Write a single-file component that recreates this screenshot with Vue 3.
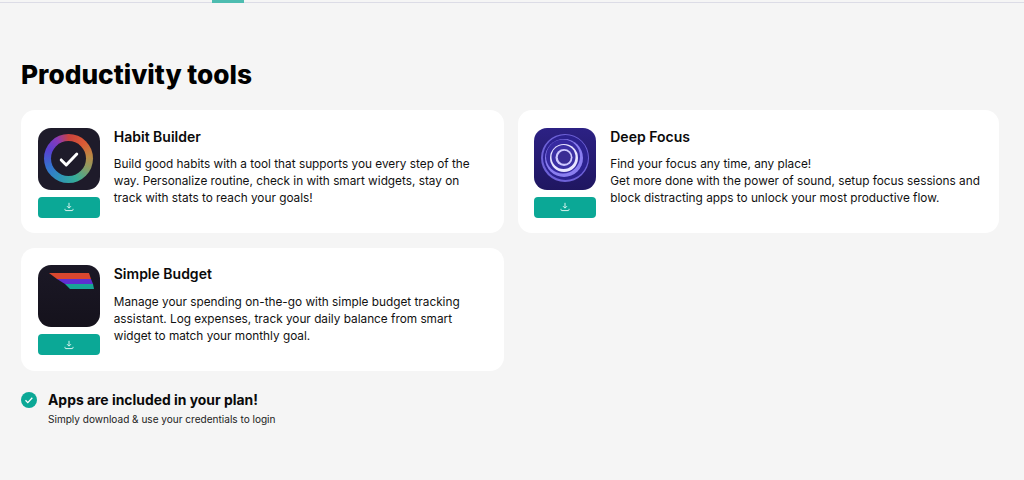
<script setup>
const conic = 'conic-gradient(from 0deg, #c8423f 0deg, #dc5a34 45deg, #b98a45 85deg, #8c9a62 115deg, #35ad98 160deg, #2f93b8 205deg, #3374cf 245deg, #5a3fd0 295deg, #8a3ab8 330deg, #c8423f 360deg)'
</script>

<template>
  <div class="page">
    <div class="topbar"><span class="tab"></span></div>
    <main class="content">
      <h1 class="title">Productivity tools</h1>
      <div class="grid">
        <article class="card">
          <div class="side">
            <div class="icon habit">
              <div class="ring" :style="{ background: conic }"><div class="ring-hole"></div></div>
              <svg class="check" viewBox="0 0 24 24" width="22" height="22"><path d="M3.500 13l5.500 5.500L20.500 6.500" fill="none" stroke="#fff" stroke-width="3.200" stroke-linecap="round" stroke-linejoin="round"/></svg>
            </div>
            <button class="dl"><svg viewBox="0 0 12 12" width="10" height="10"><path d="M6 1v6.200M3.600 5l2.400 2.400L8.400 5M1.200 8.200v1.200c0 .5.400.9.900.9h7.800c.5 0 .9-.4.900-.9V8.200" fill="none" stroke="#d7f3ee" stroke-width="1.200"/></svg></button>
          </div>
          <div class="body">
            <h2>Habit Builder</h2>
            <p>Build good habits with a tool that supports you every step of the way. Personalize routine, check in with smart widgets, stay on track with stats to reach your goals!</p>
          </div>
        </article>
        <article class="card">
          <div class="side">
            <div class="icon focus">
              <svg viewBox="0 0 62 62" width="62" height="62">
                <circle cx="31" cy="30" r="24" fill="#6e62d8"/>
                <circle cx="31.500" cy="29.500" r="22.500" fill="#2c2290"/>
                <circle cx="30" cy="30" r="19" fill="#8a7ef0"/>
                <circle cx="29" cy="28.500" r="17" fill="#362aa0"/>
                <circle cx="30" cy="30" r="14" fill="#e8e5ff"/>
                <circle cx="29.500" cy="29" r="12" fill="#3c30a4"/>
                <circle cx="30" cy="29.500" r="8.500" fill="#cfc9ff"/>
                <circle cx="30.300" cy="29.300" r="6.500" fill="#3a2c94"/>
              </svg>
            </div>
            <button class="dl"><svg viewBox="0 0 12 12" width="10" height="10"><path d="M6 1v6.200M3.600 5l2.400 2.400L8.400 5M1.200 8.200v1.200c0 .5.400.9.900.9h7.800c.5 0 .9-.4.900-.9V8.200" fill="none" stroke="#d7f3ee" stroke-width="1.200"/></svg></button>
          </div>
          <div class="body">
            <h2>Deep Focus</h2>
            <p>Find your focus any time, any place!<br>Get more done with the power of sound, setup focus sessions and block distracting apps to unlock your most productive flow.</p>
          </div>
        </article>
        <article class="card">
          <div class="side">
            <div class="icon budget">
              <svg viewBox="0 0 62 62" width="62" height="62">
                <polygon points="11,8 51,8 53,14 19,14" fill="#d9472f"/>
                <polygon points="19,14 53,14 55,19 27,19" fill="#5f2fd0"/>
                <polygon points="27,19 55,19 56,24 32,24" fill="#19a596"/>
              </svg>
            </div>
            <button class="dl"><svg viewBox="0 0 12 12" width="10" height="10"><path d="M6 1v6.200M3.600 5l2.400 2.400L8.400 5M1.200 8.200v1.200c0 .5.400.9.900.9h7.800c.5 0 .9-.4.900-.9V8.200" fill="none" stroke="#d7f3ee" stroke-width="1.200"/></svg></button>
          </div>
          <div class="body">
            <h2>Simple Budget</h2>
            <p>Manage your spending on-the-go with simple budget tracking assistant. Log expenses, track your daily balance from smart widget to match your monthly goal.</p>
          </div>
        </article>
      </div>
      <div class="note">
        <span class="badge"><svg viewBox="0 0 16 16" width="16" height="16"><path d="M4.500 8.300l2.300 2.300 4.500-4.800" fill="none" stroke="#fff" stroke-width="1.300"/></svg></span>
        <div>
          <div class="note-title">Apps are included in your plan!</div>
          <div class="note-sub">Simply download &amp; use your credentials to login</div>
        </div>
      </div>
    </main>
  </div>
</template>

<style>
html, body { margin: 0; background: #f5f5f5; }
</style>

<style scoped>
.page {
  height: 480px;
  overflow: hidden;
  background: #f5f5f5;
  font-family: "Inter", "Liberation Sans", sans-serif;
  color: #0a0a0a;
}
.topbar {
  height: 3px;
  border-bottom: 1px solid #dcdce6;
  box-sizing: border-box;
  padding-left: 212px;
}
.tab {
  display: block;
  width: 32px;
  height: 3px;
  background: #4dbcb0;
}
.content { padding: 0 25px 0 21px; }
.title {
  margin: 57px 0 19.750px;
  font-size: 26.250px;
  line-height: 30px;
  font-weight: 800;
  color: #000;
}
.grid {
  display: grid;
  grid-template-columns: 482.500px 481px;
  column-gap: 14px;
  row-gap: 14.750px;
}
.card {
  display: flex;
  height: 123px;
  box-sizing: border-box;
  padding: 17.750px 16px 0 16.750px;
  background: #fff;
  border-radius: 14px;
}
.side { width: 62px; flex: none; margin-right: 14px; }
.icon {
  position: relative;
  width: 62px;
  height: 62px;
  border-radius: 13px;
  overflow: hidden;
  display: flex;
  align-items: center;
  justify-content: center;
}
.habit { background: #1e1b2a; }
.ring {
  width: 49px;
  height: 49px;
  border-radius: 50%;
  display: flex;
  align-items: center;
  justify-content: center;
}
.ring-hole {
  width: 35px;
  height: 35px;
  border-radius: 50%;
  background: #1e1b2a;
}
.check { position: absolute; left: 20px; top: 20px; }
.focus { background: linear-gradient(180deg, #2c2184, #1f1660); }
.budget { background: linear-gradient(180deg, #1b1826, #15121c); }
.dl {
  display: flex;
  align-items: center;
  justify-content: center;
  width: 62px;
  height: 21px;
  margin-top: 7px;
  padding: 0;
  border: 0;
  border-radius: 4px;
  background: #0ba896;
}
.body { flex: 1; min-width: 0; }
h2 {
  margin: 0 0 10.500px;
  font-size: 14px;
  line-height: 18px;
  font-weight: 600;
}
p {
  margin: 0;
  font-size: 11.800px;
  line-height: 17px;
  color: #111;
}
.note {
  display: flex;
  gap: 11px;
  margin-top: 19.500px;
}
.badge {
  flex: none;
  width: 16px;
  height: 16px;
  margin-top: 2px;
  border-radius: 50%;
  background: #0ba896;
}
.badge svg { display: block; }
.note-title {
  font-size: 13.900px;
  line-height: 20px;
  font-weight: 700;
}
.note-sub {
  margin-top: 2px;
  font-size: 10.060px;
  line-height: 14px;
  color: #222;
}
</style>
